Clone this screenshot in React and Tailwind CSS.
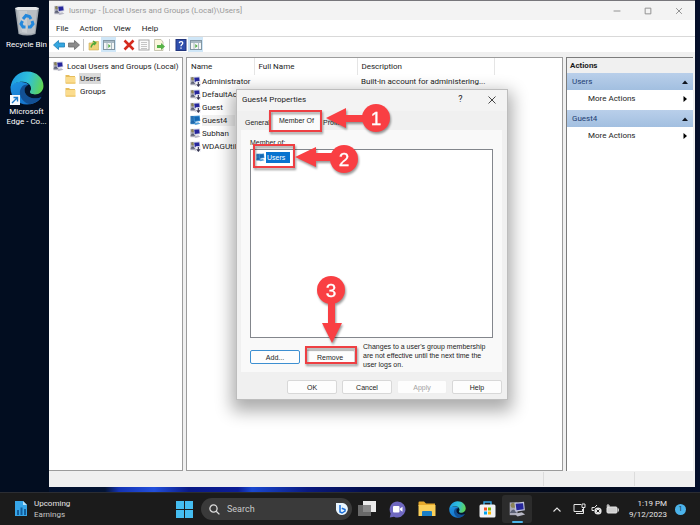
import React from "react";

const users = [
  { name: "Administrator", disabled: true, description: "Built-in account for administering..." },
  { name: "DefaultAc...", disabled: true, description: "" },
  { name: "Guest", disabled: true, description: "" },
  { name: "Guest4", selected: true, description: "" },
  { name: "Subhan", description: "" },
  { name: "WDAGUtil...", disabled: true, description: "" },
];

function ConsoleIcon({ className = "size-3", disabled, selected }) {
  return (
    <svg viewBox="0 0 12 12" className={`shrink-0 ${className}`} aria-hidden="true">
      <rect x="0.5" y="1" width="5.5" height="9" fill={selected ? "#2d78b8" : "#a9a9b8"} />
      <circle cx="3" cy="3" r="1.8" fill={selected ? "#2a6fae" : "#8a8358"} />
      <path d="M0.5 8.5 Q3 3.5 5.5 8.5Z" fill={selected ? "#1f65a8" : "#5b6074"} />
      <path d="M3.8 1.2 L10.6 0.6 L11.2 6.6 L4.6 7.6Z" fill={selected ? "#3e93d4" : "#c3c6dd"} />
      <path d="M4.7 2 L9.9 1.5 L10.4 5.8 L5.3 6.6Z" fill={selected ? "#1567b3" : "#26269c"} />
      <path d="M4 9 L9 8 L11.4 9.6 L6 11Z" fill={selected ? "#4f9dd8" : "#b9b9c6"} />
      {disabled && (
        <g>
          <rect x="6.3" y="5.8" width="5.7" height="6.2" fill="#f4f4fa" />
          <path d="M9.1 6.6V10.6M7.3 9L9.1 11L10.9 9" fill="none" stroke="#33334d" strokeWidth="1.2" />
        </g>
      )}
    </svg>
  );
}

function FolderIcon({ className }) {
  return (
    <svg viewBox="0 0 11 10" className={`shrink-0 ${className}`} aria-hidden="true">
      <path d="M0.5 1H4L5 2H10V9.5H0.5Z" fill="#e6bd5c" />
      <path d="M1 3H10.5V9.5H1Z" fill="#fbdc8d" />
      <path d="M1 8.5H10.5V9.5H1Z" fill="#eac267" />
    </svg>
  );
}

function EdgeIcon({ id, className }) {
  return (
    <svg viewBox="0 0 32 32" className={`shrink-0 ${className}`} aria-hidden="true">
      <defs>
        <linearGradient id={`${id}-top`} x1="0" y1="0.4" x2="1" y2="0.6">
          <stop offset="0" stopColor="#1d9be4" />
          <stop offset="0.5" stopColor="#2fc0dc" />
          <stop offset="1" stopColor="#62d64e" />
        </linearGradient>
        <linearGradient id={`${id}-low`} x1="0" y1="0" x2="0.7" y2="1">
          <stop offset="0" stopColor="#1c93e2" />
          <stop offset="1" stopColor="#1670c8" />
        </linearGradient>
      </defs>
      <path d="M0.5 16C0.5 12 6 9.500 12.500 10.500C17 11 19 14 18.500 17C15 21 19 27 29.500 24.500C27 29 22 31.500 16 31.500C7.500 31.500 0.5 24.500 0.5 16Z" fill={`url(#${id}-low)`} />
      <path d="M18 13C12 11.500 8.500 17 9.500 22C10.500 27 14.500 30.500 19 31.200C23.500 30.500 27.500 28 29.700 24.300C23 27.500 15.500 25 14 20C13.300 17.500 14.500 15 18 13Z" fill="#125095" />
      <path d="M14 20C13 16 15.500 13.500 18.200 13C20.500 15 20 17.500 19 18.800C18.300 20.500 20 22.500 24 22.500C27 22.500 29.500 21 31 19.500C31 22 30.500 23.500 29.700 24.300C23.500 27.500 15.500 25 14 20Z" fill="#05142c" />
      <path d="M0.500 16C1 7.500 7.500 0.500 16 0.500C25.500 0.500 31.500 7 31.500 14C31.500 19 27.500 22 23.500 22C20 22 18 20.500 19 18.800C21.500 15.500 18 10 12 10C6 10 1.500 12.500 0.500 16Z" fill={`url(#${id}-top)`} />
    </svg>
  );
}

function RecycleIcon() {
  return (
    <svg viewBox="0 0 26 30" className="h-[30px] w-[26px]" aria-hidden="true">
      <path d="M1 2L25 2L21.500 28Q13 31 4.500 28Z" fill="#9ea5ac" />
      <path d="M1 2L4 1H22L25 2L23 4H3Z" fill="#e6e8ea" />
      <path d="M3 4H23L20.500 27Q13 29 5.500 27Z" fill="#b9bec3" />
      <path d="M5 5L8 26L13 27V5Z" fill="#d2d5d8" opacity="0.6" />
      <g fill="none" stroke="#2488dc" strokeWidth="3">
        <path d="M9 13L12 9.500L15.500 10.500L17 13" />
        <path d="M18 15L19 18L16.500 21H14" />
        <path d="M11.500 21H9L7 18L8.500 15" />
      </g>
    </svg>
  );
}

function Tool({ label, active, children }) {
  return (
    <button
      type="button"
      aria-label={label}
      className={`flex h-[15px] w-[15px] items-center justify-center ${active ? "bg-[#cfe6f7]" : ""}`}
    >
      <svg viewBox="0 0 12 12" className="size-3" aria-hidden="true">{children}</svg>
    </button>
  );
}

function PaneGlyph() {
  return (
    <g>
      <rect x="0.500" y="1.500" width="11" height="9" fill="#f4f6f6" stroke="#8296a3" />
      <path d="M1 3H11" stroke="#8fa4b2" strokeWidth="1.500" />
      <path d="M4 4V10M8.500 4V10" stroke="#9aa9b0" strokeWidth="0.800" />
      <path d="M5.300 5L7.700 7L5.300 9Z" fill="#4fae43" />
    </g>
  );
}

function Toolbar() {
  return (
    <div className="flex h-4 items-center border-t border-[#d9d9d9] bg-white pl-0.5">
      <Tool label="Back"><path d="M0.500 6L5.500 1.500V4H11.500V8H5.500V10.500Z" fill="#35a7e0" stroke="#1e7fb8" strokeWidth="0.800" /></Tool>
      <Tool label="Forward"><path d="M11.500 6L6.500 1.500V4H0.500V8H6.500V10.500Z" fill="#8b8b8b" stroke="#6c6c6c" strokeWidth="0.800" /></Tool>
      <span className="mx-0.5 h-3 w-px bg-[#c4c4c4]" />
      <Tool label="Up one level"><path d="M1 4H4L5 2.500H10.500V11H1Z" fill="#efd27a" stroke="#c9ac52" strokeWidth="0.600" /><path d="M3 8.500Q4 4.500 7 4M5 2L7.800 3.800L6 6" fill="none" stroke="#4fa83a" strokeWidth="1.400" /></Tool>
      <Tool label="Show console tree" active><PaneGlyph /></Tool>
      <span className="mx-0.5 h-3 w-px bg-transparent" />
      <Tool label="Delete"><path d="M1.500 1.500L10.500 10.500M10.500 1.500L1.500 10.500" stroke="#d52b1e" strokeWidth="2.600" /></Tool>
      <Tool label="Properties"><rect x="1" y="1" width="10" height="10" fill="#fafafa" stroke="#a6a6a6" /><path d="M3 3.500H9M3 5.500H9M3 7.500H9M3 9.500H9" stroke="#b7b7b7" strokeWidth="0.800" /></Tool>
      <Tool label="Export list"><path d="M1.500 0.500H8L10 3V11.500H1.500Z" fill="#faf6dc" stroke="#b9b79f" strokeWidth="0.800" /><path d="M4 6H8V4L12 7.500L8 11V9H4Z" fill="#56b347" /></Tool>
      <span className="mx-[3px] h-3 w-px bg-[#c4c4c4]" />
      <Tool label="Help"><rect x="1" y="0.500" width="10" height="11" fill="#2e4fae" stroke="#22357c" /><path d="M4.200 4.200C4.500 2 8 2.200 7.700 4.300C7.500 5.600 6 5.700 6 7.200M6 8.400V9.700" fill="none" stroke="#ffffff" strokeWidth="1.300" /></Tool>
      <Tool label="Show action pane" active><PaneGlyph /></Tool>
    </div>
  );
}

function ActionGroup({ title }) {
  return (
    <section>
      <h3 className="flex h-[17px] items-center justify-between bg-gradient-to-b from-[#b9cfea] to-[#a2bfe0] pr-[5px] pl-[5px] text-[#1d3d72]">
        {title}
        <svg viewBox="0 0 6 4" className="h-1 w-1.5" aria-hidden="true"><path d="M0 4L3 0.500L6 4Z" fill="#10151f" /></svg>
      </h3>
      <button type="button" className="flex h-5 w-full items-center justify-between pr-1.5 pb-[3px] pl-[21px]">
        More Actions
        <svg viewBox="0 0 4 6" className="h-1.5 w-1" aria-hidden="true"><path d="M0.500 0L4 3L0.500 6Z" fill="#000000" /></svg>
      </button>
    </section>
  );
}

function ConsoleWindow() {
  return (
    <main className="mr-[5px] mb-[5px] flex min-w-0 flex-1 flex-col border-t border-[#77767b] bg-[#f0f0f0] text-[#1c1c1c]">
      <header className="flex h-[19px] items-center bg-[#f3f3f3] pl-[5px] text-[#9a9a9a]">
        <ConsoleIcon className="mr-1 size-[11px]" />
        <h1 className="flex-1">lusrmgr - [Local Users and Groups (Local)\Users]</h1>
        <div className="flex gap-[17px] pr-[9px] text-[#8a8a8a]">
          {[["Minimize", "M1 7H13"], ["Maximize", "M2 2H12V12H2Z"], ["Close", "M2 2L12 12M12 2L2 12"]].map(([label, d]) => (
            <button key={label} type="button" aria-label={label} className="flex w-3.5 justify-center">
              <svg viewBox="0 0 14 14" className="size-2" aria-hidden="true"><path d={d} fill="none" stroke="currentColor" strokeWidth="1.600" /></svg>
            </button>
          ))}
        </div>
      </header>
      <nav className="flex h-4 items-center gap-[11px] bg-white pl-[7px]">
        {["File", "Action", "View", "Help"].map((m) => <button key={m} type="button">{m}</button>)}
      </nav>
      <Toolbar />
      <div className="mt-[5px] flex min-h-0 flex-1 gap-[3px] pr-0.5">
        <aside className="w-[134px] border border-l-0 border-[#9c9c9c] bg-white pt-0.5">
          <div className="flex h-3 items-center gap-[3px] pl-1 whitespace-nowrap"><ConsoleIcon className="size-[11px]" />Local Users and Groups (Local)</div>
          <ul className="pl-4">
            {["Users", "Groups"].map((n) => (
              <li key={n}>
                <button type="button" className="flex h-[13px] items-center gap-[3px]">
                  <FolderIcon className="h-2.5 w-[11px]" />
                  <span className={`px-px leading-[11px] ${n === "Users" ? "bg-[#dadada]" : ""}`}>{n}</span>
                </button>
              </li>
            ))}
          </ul>
        </aside>
        <section className="min-w-0 flex-1 overflow-hidden border border-[#9c9c9c] bg-white">
          <table className="w-full table-fixed border-collapse text-left">
            <colgroup><col className="w-[67px]" /><col className="w-[103px]" /><col className="w-[137px]" /><col /></colgroup>
            <thead>
              <tr className="h-[17px]">
                {["Name", "Full Name", "Description"].map((h) => <th key={h} scope="col" className="border-r border-[#e5e5e5] pl-[4px] font-normal">{h}</th>)}
                <td />
              </tr>
            </thead>
            <tbody>
              {users.map((u) => (
                <tr key={u.name} className="h-[13px]">
                  <td className="pl-[3px] whitespace-nowrap">
                    <span className="flex items-center gap-px">
                      <ConsoleIcon className="size-[11px]" disabled={u.disabled} selected={u.selected} />
                      <span className={u.selected ? "bg-[#f1f1f1] pr-2" : ""}>{u.name}</span>
                    </span>
                  </td>
                  <td />
                  <td className="pl-[4px] whitespace-nowrap">{u.description}</td>
                  <td />
                </tr>
              ))}
            </tbody>
          </table>
        </section>
        <aside className="w-[127px] border-t border-l border-[#7c7c7c] bg-white">
          <h2 className="flex h-[15px] items-center bg-[#f0f0f0] pl-[3px] font-bold">Actions</h2>
          <ActionGroup title="Users" />
          <ActionGroup title="Guest4" />
        </aside>
      </div>
      <footer className="flex h-4 justify-end">
        <span className="my-px w-[92px] border-x border-[#dcdcdc]" />
        <span className="w-[60px]" />
      </footer>
    </main>
  );
}

function DialogButton({ children, className = "border-[#d8d8d8]" }) {
  return (
    <button type="button" className={`h-[14px] w-[50px] shrink-0 rounded-[2px] border bg-[#fdfdfd] leading-none ${className}`}>
      {children}
    </button>
  );
}

function Callouts() {
  return (
    <svg viewBox="0 0 272 310" className="pointer-events-none absolute -top-px -left-px h-[310px] w-[272px] overflow-visible drop-shadow-[1px_2px_1px_rgba(0,0,0,0.4)]" aria-hidden="true">
      <g fill="none" stroke="#ee3f43" strokeWidth="2">
        <rect x="34" y="22" width="51" height="20" />
        <rect x="18" y="56" width="40" height="22" />
        <rect x="70" y="258" width="50" height="16" />
      </g>
      <g fill="#f93f43">
        <path d="M90 29L110 19V26H130V33H110V39Z" />
        <path d="M59 68L80 58V64H98V72H80V78Z" />
        <path d="M92 212H99V234H106L96 254L86 234H92Z" />
        <circle cx="140" cy="29" r="14" />
        <circle cx="108" cy="70" r="14" />
        <circle cx="95" cy="201" r="14" />
      </g>
      <g fill="#ffffff" fontFamily="Liberation Sans, sans-serif" fontSize="19" textAnchor="middle" stroke="#ffffff" strokeWidth="0.300">
        <text x="140" y="36">1</text>
        <text x="108" y="77">2</text>
        <text x="95" y="208">3</text>
      </g>
    </svg>
  );
}

function PropertiesDialog() {
  return (
    <section role="dialog" aria-label="Guest4 Properties" className="absolute top-[89px] left-[236px] w-[272px] border border-[#bdbdbd] bg-[#f0f0f0] text-[#1c1c1c] shadow-[0_7px_16px_4px_rgba(0,0,0,0.33)]">
      <header className="flex h-[21px] items-center bg-[#f3f3f3] pb-0.5 pl-[5px]">
        <h2 className="flex-1">Guest4 Properties</h2>
        <button type="button" aria-label="Context help" className="w-[31px] text-[9px]">?</button>
        <button type="button" aria-label="Close" className="flex w-[31px] justify-center">
          <svg viewBox="0 0 8 8" className="size-2" aria-hidden="true"><path d="M0.500 0.500L7.500 7.500M7.500 0.500L0.500 7.500" fill="none" stroke="#333333" strokeWidth="0.900" /></svg>
        </button>
      </header>
      <div className="px-1 pb-[5px] font-['Liberation_Sans',sans-serif] text-[7px]">
        <div role="tablist" className="flex h-[19px] items-end">
          <button type="button" role="tab" aria-selected="false" className="h-4 w-8 overflow-hidden pl-1 text-left">General</button>
          <button type="button" role="tab" aria-selected="true" className="h-[18px] w-[47px] bg-[#fbfbfb] pb-0.5">Member Of</button>
          <button type="button" role="tab" aria-selected="false" className="h-4 pl-[3px]">Profile</button>
        </div>
        <div role="tabpanel" className="mr-px bg-[#f9f9f9] px-[9px] pt-[7px] pb-[3px]">
          <p id="member-of-label" className="h-3 leading-[11px]">Member of:</p>
          <ul aria-labelledby="member-of-label" className="h-[189px] border border-[#83868c] bg-white pt-px pl-[5px]">
            <li className="flex h-3 items-center gap-px">
              <ConsoleIcon className="size-[9px]" selected />
              <span className="w-6 bg-[#0873cf] pl-px leading-[11px] text-white">Users</span>
            </li>
          </ul>
          <div className="flex gap-[5px] pt-1">
            <DialogButton className="mt-2 border-[#3d8fd1]">Add...</DialogButton>
            <DialogButton className="mt-2 border-[#d8d8d8]">Remove</DialogButton>
            <p className="pl-[3px] leading-[9px] whitespace-nowrap">Changes to a user's group membership<br />are not effective until the next time the<br />user logs on.</p>
          </div>
        </div>
        <div className="mr-px flex justify-end gap-[5px] pt-2">
          <DialogButton>OK</DialogButton>
          <DialogButton>Cancel</DialogButton>
          <DialogButton className="border-[#efefef] text-[#a2a2a2]">Apply</DialogButton>
          <DialogButton>Help</DialogButton>
        </div>
      </div>
      <Callouts />
    </section>
  );
}

function DesktopIcons() {
  return (
    <nav aria-label="Desktop" className="w-[49px] shrink-0 pt-[6px] text-center text-white">
      <a href="#recycle-bin" className="flex h-[65px] flex-col items-center gap-[3px] pl-1 whitespace-nowrap"><RecycleIcon />Recycle Bin</a>
      <a href="#edge" className="flex flex-col items-center gap-0.5 pl-1 leading-[10px]">
        <span className="relative">
          <EdgeIcon id="desk-edge" className="size-[34px]" />
          <svg viewBox="0 0 10 10" className="absolute bottom-0 left-0 size-2.5" aria-hidden="true"><path d="M0 0H10V10H0Z" fill="#f5f9fd" /><path d="M2 8L7 3M3.500 2.500H7.500V6.500" fill="none" stroke="#1a78c8" strokeWidth="1.400" /></svg>
        </span>
        <span>Microsoft<br />Edge - Co...</span>
      </a>
    </nav>
  );
}

function TaskButton({ label, className = "", children }) {
  return <button type="button" aria-label={label} className={`flex h-7 w-[30px] items-center justify-center ${className}`}>{children}</button>;
}

function Taskbar() {
  return (
    <footer className="grid h-[33px] shrink-0 grid-cols-[1fr_auto_1fr] items-center border-t border-[#2b2d33] bg-[#1b1b1b] text-[#e6e6e6]">
      <button type="button" className="flex items-center gap-[7px] pl-3.5 text-left leading-[11px]">
        <svg viewBox="0 0 13 16" className="h-4 w-[13px]" aria-hidden="true">
          <path d="M1 0H9L13 4V15H1Z" fill="#36a5e8" /><path d="M9 0V4H13Z" fill="#b6e2fb" />
          <path d="M3 14V9H5V14M6.500 14V6.500H8.500V14M10 14V8H12V14" fill="#125d9c" />
        </svg>
        <span>Upcoming<br /><span className="text-[#c6c6c6]">Earnings</span></span>
      </button>
      <div className="flex items-center pl-2">
        <button type="button" aria-label="Start" className="mr-2">
          <svg viewBox="0 0 17 17" className="size-[17px]" aria-hidden="true"><path d="M0 0H8V8H0ZM9 0H17V8H9ZM0 9H8V17H0ZM9 9H17V17H9Z" fill="#45bdf0" /></svg>
        </button>
        <label className="flex h-[22px] w-[151px] items-center rounded-full bg-[#3a3a3a] pr-[3px] pl-2">
          <svg viewBox="0 0 11 11" className="mr-[7px] size-[11px]" aria-hidden="true"><circle cx="4.500" cy="4.500" r="3.600" fill="none" stroke="#dddddd" strokeWidth="1.300" /><path d="M7.200 7.200L10.400 10.400" stroke="#dddddd" strokeWidth="1.300" /></svg>
          <input aria-label="Search" placeholder="Search" className="w-0 flex-1 bg-transparent text-[9px] outline-none placeholder:text-[#c9c9c9]" />
          <svg viewBox="0 0 14 14" className="size-3.5" aria-hidden="true"><path d="M1 1H8A6 6 0 1 1 1 8Z" fill="#e9f6ff" /><path d="M5 3V10L7 11L10 9V7.500L6.800 6.300" fill="none" stroke="#1c6fd8" strokeWidth="1.500" /></svg>
        </label>
        <TaskButton label="Task view">
          <svg viewBox="0 0 19 16" className="h-4 w-[19px]" aria-hidden="true"><path d="M5 0H18V11H5Z" fill="#ebebeb" /><path d="M0 4H13V15H0Z" fill="#777777" opacity="0.850" /></svg>
        </TaskButton>
        <TaskButton label="Chat">
          <svg viewBox="0 0 17 17" className="size-[17px]" aria-hidden="true"><path d="M8.500 0.500A8 8 0 1 1 5 15.700L0.800 16.500L1.700 12.500A8 8 0 0 1 8.500 0.500Z" fill="#6f68c0" /><rect x="4" y="5" width="6.500" height="6.500" rx="1" fill="#ffffff" /><path d="M11 7.500L13.500 5.800V10.800L11 9Z" fill="#ffffff" /></svg>
        </TaskButton>
        <TaskButton label="File Explorer">
          <svg viewBox="0 0 18 16" className="h-4 w-[18px]" aria-hidden="true"><path d="M0.500 1.500Q0.500 0.500 1.500 0.500H6L8 2.500H17V5H0.500Z" fill="#e6a92c" /><path d="M0.500 4H17.500V15H0.500Z" fill="#fbd05a" /><path d="M4 15V11Q4 10 5 10H13Q14 10 14 11V15Z" fill="#1b7ec4" /></svg>
        </TaskButton>
        <TaskButton label="Microsoft Edge"><EdgeIcon id="task-edge" className="size-[17px]" /></TaskButton>
        <TaskButton label="Microsoft Store">
          <svg viewBox="0 0 17 17" className="size-[17px]" aria-hidden="true"><path d="M5 4V1H12V4" fill="none" stroke="#35a5e5" strokeWidth="1.400" /><rect x="0.500" y="3.500" width="16" height="13" rx="1.500" fill="#f0f2f4" /><path d="M5 6.500H8V9.500H5Z" fill="#f05125" /><path d="M9 6.500H12V9.500H9Z" fill="#7fba00" /><path d="M5 10.500H8V13.500H5Z" fill="#00a4ef" /><path d="M9 10.500H12V13.500H9Z" fill="#ffb900" /></svg>
        </TaskButton>
        <TaskButton label="Local Users and Groups" className="relative rounded-[3px] bg-[#2c2c2c]">
          <ConsoleIcon className="size-[17px]" />
          <span className="absolute bottom-0 h-0.5 w-[11px] rounded-full bg-[#4cb4e8]" />
        </TaskButton>
      </div>
      <div className="flex items-center justify-end pr-3.5">
        <svg viewBox="0 0 8 5" className="mr-3 h-[5px] w-2" aria-hidden="true"><path d="M0.500 4.500L4 1L7.500 4.500" fill="none" stroke="currentColor" strokeWidth="1.100" /></svg>
        <svg viewBox="0 0 13 12" className="mr-[5px] h-3 w-[13px]" aria-hidden="true"><path d="M8 1.500H1V8.500H9.500V6M3 10.500H8M10.500 4.500V10.500H8M9 1H12V4.500H9Z" fill="none" stroke="currentColor" /></svg>
        <svg viewBox="0 0 11 11" className="mr-[4px] size-[11px]" aria-hidden="true"><path d="M6 1L3.500 3.500H1V6.500H3" fill="none" stroke="currentColor" /><circle cx="7" cy="7" r="3.600" fill="#e6e6e6" /><path d="M5.600 5.600L8.400 8.400M8.400 5.600L5.600 8.400" stroke="#222222" /></svg>
        <svg viewBox="0 0 13 10" className="mr-[10px] h-2.5 w-[13px]" aria-hidden="true"><rect x="1" y="3" width="10" height="6" rx="1" fill="#cfcfcf" stroke="currentColor" /><path d="M12.300 4.500V7.500M2 0V4M0.500 2H4" stroke="currentColor" /></svg>
        <time className="text-right leading-[11px]">1:19 PM<br />9/12/2023</time>
        <span className="ml-2 flex size-[11px] items-center justify-center rounded-full bg-[#4cb3ea] text-[7px] text-[#12354a]">1</span>
      </div>
    </footer>
  );
}

export default function App() {
  return (
    <div className="flex h-screen min-h-[420px] flex-col bg-[#020d20] font-[Roboto,'Open_Sans',sans-serif] text-[8px] leading-[11px]">
      <div className="relative flex min-h-0 flex-1 bg-[linear-gradient(90deg,#03102a_0%,#041433_15%,#1433b4_17%,#2350dc_22%,#0a1a86_27%,#0c1d96_34%,#1a48d0_36%,#0a1a80_44%,#040f4c_52%,#030a30_62%,#020a1c_80%,#050f2a_100%)]">
        <div className="absolute inset-y-0 left-0 w-[49px] bg-[#020d20]" />
        <div className="relative flex min-w-0 flex-1">
          <DesktopIcons />
          <ConsoleWindow />
        </div>
        <PropertiesDialog />
      </div>
      <Taskbar />
    </div>
  );
}
